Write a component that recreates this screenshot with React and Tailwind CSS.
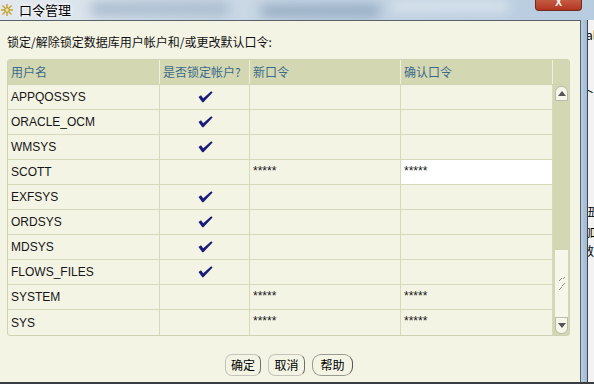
import React from "react";

const CJK = { fontFamily: '"Noto Sans CJK SC", "Noto Sans", sans-serif' };
const LAT = { fontFamily: '"Liberation Sans", Arial, "Noto Sans CJK SC", sans-serif' };

const rows = [
  { name: "APPQOSSYS", lock: true },
  { name: "ORACLE_OCM", lock: true },
  { name: "WMSYS", lock: true },
  { name: "SCOTT", lock: false, pw: true, sel: true },
  { name: "EXFSYS", lock: true },
  { name: "ORDSYS", lock: true },
  { name: "MDSYS", lock: true },
  { name: "FLOWS_FILES", lock: true },
  { name: "SYSTEM", lock: false, pw: true },
  { name: "SYS", lock: false, pw: true },
];

function Check() {
  return (
    <svg width="15" height="12" viewBox="0 0 15 12">
      <path d="M0.5 6 L3 4.2 L5.2 7.2 L13.2 0.3 L14.6 1.4 L5.4 11.2 L4.3 11.2 Z" fill="#1b1b7a" />
    </svg>
  );
}

function Grip() {
  return (
    <svg width="10" height="18" viewBox="0 0 10 18">
      <path d="M2 6 L5 3 M5 11 L8 8 M2 15 L5 12 M6 4 L8 2" stroke="#8a8c80" strokeWidth="1" />
    </svg>
  );
}

export default function App() {
  return (
    <div className="w-[594px] h-[384px] overflow-hidden flex flex-col bg-[#f2f2f2] relative">
      {/* Title bar */}
      <div className="h-[20px] shrink-0 relative flex items-center bg-gradient-to-r from-[#e3e9ee] via-[#c4d4e3] to-[#b8cce0] overflow-hidden">
        <div className="absolute left-[90px] top-[2px] w-[140px] h-[14px] rounded-full bg-[#a9bccf] blur-[6px]" />
        <div className="absolute left-[260px] top-[6px] w-[120px] h-[10px] rounded-full bg-[#8ea5bd] blur-[6px]" />
        <div className="absolute left-[390px] top-[0px] w-[120px] h-[12px] rounded-full bg-[#d9e3ec] blur-[6px]" />
        <div className="relative flex items-center pl-[1px] gap-[6px]">
          <svg width="12" height="14" viewBox="0 0 12 14">
            <path d="M6 1 L6 13 M0 7 L12 7 M1.5 2.5 L10.5 11.5 M10.5 2.5 L1.5 11.5" stroke="#c9a227" strokeWidth="1.4" />
            <circle cx="6" cy="7" r="2.2" fill="#f3e38a" stroke="#8a7a40" strokeWidth="0.6" />
          </svg>
          <span className="text-[13px] leading-[16px] text-black [text-shadow:0_0_6px_#ffffff,0_0_3px_#ffffff]" style={CJK}>
            口令管理
          </span>
        </div>
        <div className="absolute left-[535px] top-0 w-[47px] h-[11px] rounded-b-[4px] border border-t-0 border-[#6e2a1e] bg-gradient-to-b from-[#c55a43] to-[#b2341f] flex justify-center">
          <span className="text-white text-[10px] leading-[6px] font-bold" style={LAT}>X</span>
        </div>
      </div>

      {/* Middle */}
      <div className="flex flex-1 min-h-0">
        {/* Dialog body */}
        <div className="w-[581px] shrink-0 bg-[#f4f4e5] border-t border-r border-[#59626b] flex flex-col pl-[7px]">
          <div className="pt-[13px] text-[12px] leading-[15px] text-[#111]" style={CJK}>
            锁定/解除锁定数据库用户帐户和/或更改默认口令:
          </div>

          {/* Table */}
          <div className="mt-[10px] w-[563px] border border-[#cfd2b4] rounded-[3px] flex flex-col">
            {/* header */}
            <div className="flex h-[25px] bg-[#d3d8b2] border-b border-[#cfd2b4] text-[12px] text-[#3c6a8c]" style={CJK}>
              <div className="w-[152px] border-r border-[#eef0dc] pl-[3px] flex items-center">用户名</div>
              <div className="w-[90px] border-r border-[#eef0dc] pl-[3px] flex items-center">是否锁定帐户?</div>
              <div className="w-[151px] border-r border-[#eef0dc] pl-[3px] flex items-center">新口令</div>
              <div className="w-[152px] border-r border-[#eef0dc] pl-[3px] flex items-center">确认口令</div>
              <div className="flex-1" />
            </div>
            {/* body */}
            <div className="flex">
              <div className="w-[545px] flex flex-col">
                {rows.map((r, i) => (
                  <div
                    key={r.name}
                    className={"flex h-[25px] text-[12px] text-[#161616] " + (i < rows.length - 1 ? "border-b border-[#d6d9bc]" : "")}
                    style={LAT}
                  >
                    <div className="w-[152px] border-r border-[#d6d9bc] pl-[3px] flex items-center">{r.name}</div>
                    <div className="w-[90px] border-r border-[#d6d9bc] flex items-center justify-center pl-[1px]">
                      {r.lock ? <Check /> : null}
                    </div>
                    <div className="w-[151px] border-r border-[#d6d9bc] pl-[3px] pt-[2px] flex items-start">
                      {r.pw ? <span className="text-[12px] leading-[18px]">*****</span> : null}
                    </div>
                    <div className={"w-[152px] border-r border-[#d6d9bc] pl-[3px] pt-[2px] flex items-start " + (r.sel ? "bg-white" : "")}>
                      {r.pw ? <span className="text-[12px] leading-[18px]">*****</span> : null}
                    </div>
                  </div>
                ))}
              </div>
              {/* scrollbar */}
              <div className="w-[16px] bg-[#d3d8b2] flex flex-col pl-[2px] pr-[1px]">
                <div className="h-[15px] mt-[1px] bg-[#f6f6ea] border border-[#b9bca6] rounded-t-[6px] flex items-center justify-center">
                  <svg width="8" height="5" viewBox="0 0 8 5"><path d="M0 5 L4 0 L8 5 Z" fill="#555" /></svg>
                </div>
                <div className="flex-1" />
                <div className="h-[67px] bg-[#f6f6ea] flex items-center justify-center">
                  <Grip />
                </div>
                <div className="h-[17px] mb-[1px] bg-[#f6f6ea] border border-[#b9bca6] rounded-b-[6px] flex items-center justify-center">
                  <svg width="8" height="5" viewBox="0 0 8 5"><path d="M0 0 L8 0 L4 5 Z" fill="#555" /></svg>
                </div>
              </div>
            </div>
          </div>

          {/* buttons */}
          <div className="mt-[18px] flex gap-[7px] pl-[218px] text-[12px] text-black" style={CJK}>
            <div className="w-[36px] h-[22px] rounded-[7px] border border-[#c4c4ba] border-r-[#6e6e6e] flex items-center justify-center">确定</div>
            <div className="w-[37px] h-[22px] rounded-[7px] border border-[#c4c4ba] border-r-[#6e6e6e] flex items-center justify-center">取消</div>
            <div className="w-[41px] h-[22px] rounded-[9px] border border-[#9a9a92] border-r-[#555] flex items-center justify-center">帮助</div>
          </div>
        </div>

        {/* right frame */}
        <div className="w-[6px] shrink-0 bg-gradient-to-r from-[#b8cde0] to-[#9fbad4]" />
        <div className="w-[1px] shrink-0 bg-[#3d4650]" />
        <div className="flex-1 bg-[#f3f3f3] relative overflow-hidden text-[12px] text-black" style={CJK}>
          <span className="absolute left-[-2px] top-[6px]">al</span>
          <span className="absolute left-[-6px] top-[62px]">卜</span>
          <span className="absolute left-[-5px] top-[183px]">紐</span>
          <span className="absolute left-[-4px] top-[203px]">加</span>
          <span className="absolute left-[-6px] top-[222px]">数</span>
        </div>
      </div>

      {/* bottom edge */}
      <div className="h-[2px] shrink-0 bg-[#3a3d42]" />
    </div>
  );
}
